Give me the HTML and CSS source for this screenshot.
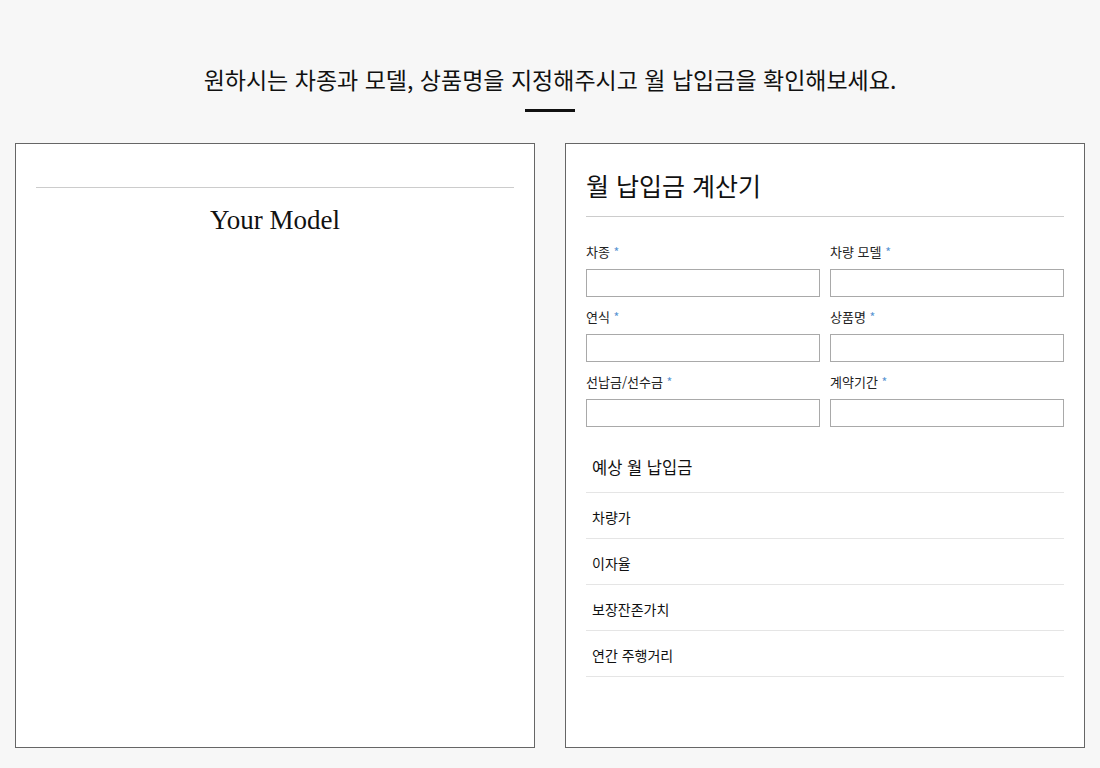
FILE: index.html
```html
<!DOCTYPE html>
<html lang="ko">
<head>
    <meta charset="UTF-8">
    <meta name="viewport" content="width=device-width, initial-scale=1.0">
    <title>월 납입금 계산기</title>
    <link rel="stylesheet" href="styles.css">
</head>
<body>
    <div class="intro">
        <h2>원하시는 차종과 모델, 상품명을 지정해주시고 월 납입금을 확인해보세요.</h2>
        <div class="bar"></div>
    </div>

    <div class="panels">
        <div class="panel model-panel">
            <div class="model-head"></div>
            <div class="model-name">Your Model</div>
        </div>

        <div class="panel calc-panel">
            <h1>월 납입금 계산기</h1>

            <div class="form-grid">
                <div class="input-group">
                    <label>차종 <span class="req">*</span></label>
                    <input type="text">
                </div>
                <div class="input-group">
                    <label>차량 모델 <span class="req">*</span></label>
                    <input type="text">
                </div>
                <div class="input-group">
                    <label>연식 <span class="req">*</span></label>
                    <input type="text">
                </div>
                <div class="input-group">
                    <label>상품명 <span class="req">*</span></label>
                    <input type="text">
                </div>
                <div class="input-group">
                    <label>선납금/선수금 <span class="req">*</span></label>
                    <input type="text">
                </div>
                <div class="input-group">
                    <label>계약기간 <span class="req">*</span></label>
                    <input type="text">
                </div>
            </div>

            <div class="result-head">예상 월 납입금</div>
            <div class="result-item">차량가</div>
            <div class="result-item">이자율</div>
            <div class="result-item">보장잔존가치</div>
            <div class="result-item">연간 주행거리</div>
        </div>
    </div>
</body>
</html>
```

FILE: styles.css
```css
body {
    margin: 0;
    background-color: #f7f7f7;
    color: #111;
    font-family: "Noto Sans CJK KR", "Noto Sans", sans-serif;
}
.intro {
    padding-top: 63px;
    text-align: center;
}
.intro h2 {
    margin: 0;
    font-size: 23px;
    font-weight: 400;
    line-height: 32px;
}
.bar {
    width: 50px;
    height: 3px;
    background-color: #111;
    margin: 14px auto 0;
}
.panels {
    display: flex;
    gap: 30px;
    padding: 0 15px;
    margin-top: 31px;
}
.panel {
    width: 520px;
    height: 605px;
    box-sizing: border-box;
    background-color: #fff;
    border: 1px solid #666;
    padding: 0 20px;
}
.model-head {
    height: 43px;
    border-bottom: 1px solid #ccc;
}
.model-name {
    margin-top: 16px;
    text-align: center;
    font-family: "Liberation Serif", serif;
    font-size: 27px;
    line-height: 32px;
}
.calc-panel h1 {
    margin: 0;
    padding: 24px 0 14px;
    font-size: 25px;
    font-weight: 400;
    line-height: 34px;
    border-bottom: 1px solid #ccc;
}
.form-grid {
    display: grid;
    grid-template-columns: 1fr 1fr;
    column-gap: 10px;
    row-gap: 11px;
    margin-top: 26px;
}
.input-group label {
    display: block;
    font-size: 13px;
    line-height: 18px;
    margin-bottom: 8px;
    color: #222;
}
.req {
    color: #5a95d2;
    font-size: 12.5px;
}
.input-group input {
    display: block;
    width: 100%;
    height: 28px;
    box-sizing: border-box;
    border: 1px solid #a9a9a9;
    background-color: #fff;
    margin: 0;
}
.result-head {
    margin-top: 25px;
    padding: 3px 6px 13px;
    font-size: 16.5px;
    line-height: 24px;
    border-bottom: 1px solid #e5e5e5;
}
.result-item {
    padding: 14px 6px 11px;
    font-size: 14px;
    line-height: 20px;
    border-bottom: 1px solid #e5e5e5;
}
```
